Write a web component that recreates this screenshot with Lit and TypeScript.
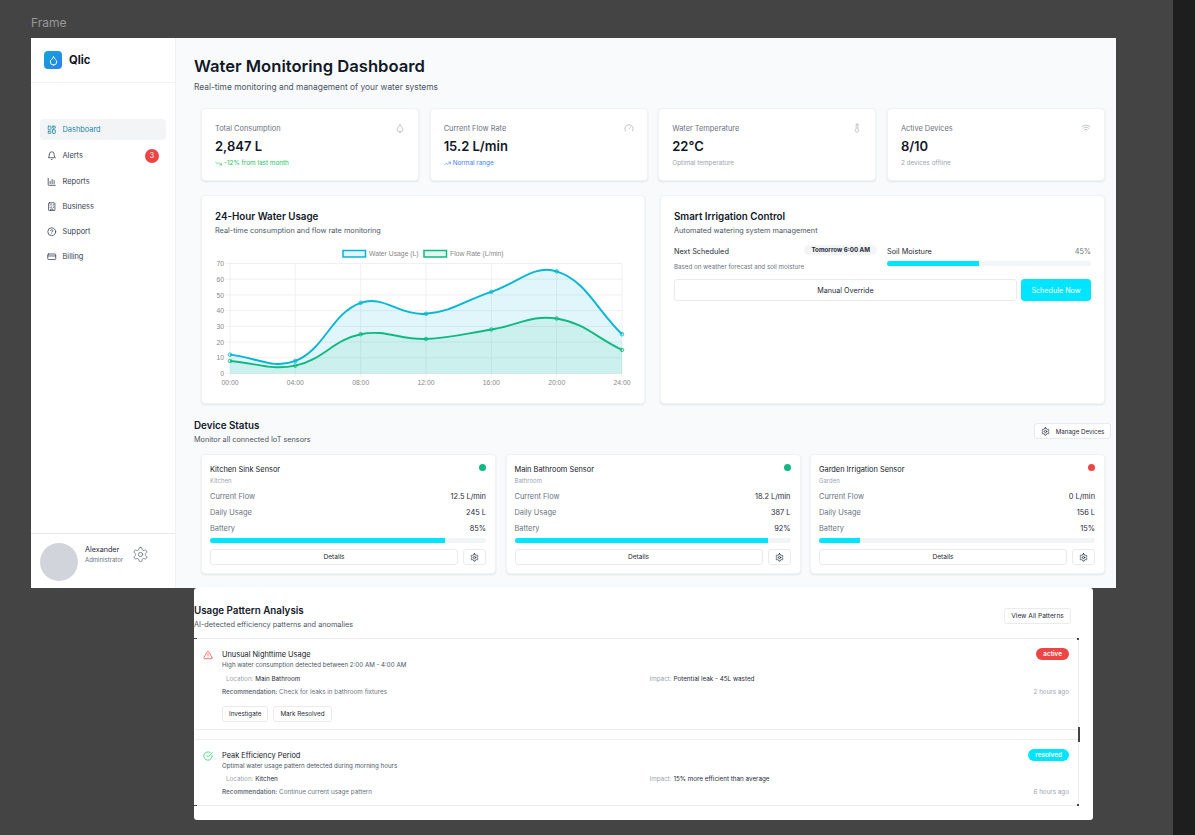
import { LitElement, html, css, svg } from 'lit';
import { customElement } from 'lit/decorators.js';

// lucide-style icon bodies, all on a 24 box
const icons: Record<string, unknown> = {
  drop: svg`<path d="M12 22a7 7 0 0 0 7-7c0-2-1-3.9-3-5.5s-3.5-4-4-6.5c-.5 2.5-2 4.9-4 6.5C6 11.1 5 13 5 15a7 7 0 0 0 7 7z"/>`,
  gauge: svg`<path d="m12 14 4-4"/><path d="M3.34 19a10 10 0 1 1 17.32 0"/>`,
  thermo: svg`<path d="M14 4v10.54a4 4 0 1 1-4 0V4a2 2 0 0 1 4 0Z"/>`,
  wifi: svg`<path d="M12 20h.01"/><path d="M2 8.82a15 15 0 0 1 20 0"/><path d="M5 12.859a10 10 0 0 1 14 0"/><path d="M8.5 16.429a5 5 0 0 1 7 0"/>`,
  dash: svg`<rect x="3" y="3" width="7" height="9" rx="1"/><rect x="14" y="3" width="7" height="5" rx="1"/><rect x="14" y="12" width="7" height="9" rx="1"/><rect x="3" y="16" width="7" height="5" rx="1"/>`,
  bell: svg`<path d="M6 8a6 6 0 0 1 12 0c0 7 3 9 3 9H3s3-2 3-9"/><path d="M10.3 21a1.94 1.94 0 0 0 3.4 0"/>`,
  bars: svg`<path d="M3 3v16a2 2 0 0 0 2 2h16"/><path d="M8 17v-6"/><path d="M13 17V6"/><path d="M18 17v-8"/>`,
  building: svg`<rect x="4" y="2" width="16" height="20" rx="2"/><path d="M9 22v-4h6v4"/><path d="M8 6h.01M16 6h.01M12 6h.01M12 10h.01M12 14h.01M16 10h.01M16 14h.01M8 10h.01M8 14h.01"/>`,
  help: svg`<circle cx="12" cy="12" r="10"/><path d="M9.09 9a3 3 0 0 1 5.83 1c0 2-3 3-3 3"/><path d="M12 17h.01"/>`,
  card: svg`<rect x="2" y="5" width="20" height="14" rx="2"/><path d="M2 10h20"/>`,
  gear: svg`<path d="M12.22 2h-.44a2 2 0 0 0-2 2v.18a2 2 0 0 1-1 1.73l-.43.25a2 2 0 0 1-2 0l-.15-.08a2 2 0 0 0-2.73.73l-.22.38a2 2 0 0 0 .73 2.73l.15.1a2 2 0 0 1 1 1.72v.51a2 2 0 0 1-1 1.74l-.15.09a2 2 0 0 0-.73 2.73l.22.38a2 2 0 0 0 2.73.73l.15-.08a2 2 0 0 1 2 0l.43.25a2 2 0 0 1 1 1.73V20a2 2 0 0 0 2 2h.44a2 2 0 0 0 2-2v-.18a2 2 0 0 1 1-1.73l.43-.25a2 2 0 0 1 2 0l.15.08a2 2 0 0 0 2.73-.73l.22-.39a2 2 0 0 0-.73-2.73l-.15-.08a2 2 0 0 1-1-1.74v-.5a2 2 0 0 1 1-1.74l.15-.09a2 2 0 0 0 .73-2.73l-.22-.38a2 2 0 0 0-2.73-.73l-.15.08a2 2 0 0 1-2 0l-.43-.25a2 2 0 0 1-1-1.73V4a2 2 0 0 0-2-2z"/><circle cx="12" cy="12" r="3"/>`,
  down: svg`<path d="m22 17-8.5-8.5-5 5L2 7"/><path d="M16 17h6v-6"/>`,
  up: svg`<path d="m22 7-8.5 8.5-5-5L2 17"/><path d="M16 7h6v6"/>`,
  alert: svg`<path d="m21.73 18-8-14a2 2 0 0 0-3.48 0l-8 14A2 2 0 0 0 4 21h16a2 2 0 0 0 1.73-3"/><path d="M12 9v4"/><path d="M12 17h.01"/>`,
  check: svg`<path d="M21.801 10A10 10 0 1 1 17 3.335"/><path d="m9 11 3 3L22 4"/>`,
};

const icon = (name: string, cls = '') =>
  html`<svg class="ic ${cls}" viewBox="0 0 24 24" fill="none" stroke="currentColor" stroke-width="2" stroke-linecap="round" stroke-linejoin="round">${icons[name]}</svg>`;

const navItems = [
  { icon: 'dash', label: 'Dashboard', active: true },
  { icon: 'bell', label: 'Alerts', badge: '3' },
  { icon: 'bars', label: 'Reports' },
  { icon: 'building', label: 'Business' },
  { icon: 'help', label: 'Support' },
  { icon: 'card', label: 'Billing' },
];

const stats = [
  { label: 'Total Consumption', icon: 'drop', value: '2,847 L', note: '-12% from last month', tone: 'green', trend: 'down' },
  { label: 'Current Flow Rate', icon: 'gauge', value: '15.2 L/min', note: 'Normal range', tone: 'blue', trend: 'up' },
  { label: 'Water Temperature', icon: 'thermo', value: '22°C', note: 'Optimal temperature', tone: '', trend: '' },
  { label: 'Active Devices', icon: 'wifi', value: '8/10', note: '2 devices offline', tone: '', trend: '' },
];

const devices = [
  { name: 'Kitchen Sink Sensor', place: 'Kitchen', flow: '12.5 L/min', daily: '245 L', battery: 85, ok: true },
  { name: 'Main Bathroom Sensor', place: 'Bathroom', flow: '18.2 L/min', daily: '387 L', battery: 92, ok: true },
  { name: 'Garden Irrigation Sensor', place: 'Garden', flow: '0 L/min', daily: '156 L', battery: 15, ok: false },
];

const patterns = [
  {
    title: 'Unusual Nighttime Usage', icon: 'alert', tone: 'red', state: 'active',
    desc: 'High water consumption detected between 2:00 AM - 4:00 AM',
    place: 'Main Bathroom', impact: 'Potential leak - 45L wasted',
    rec: 'Check for leaks in bathroom fixtures', time: '2 hours ago', actions: true,
  },
  {
    title: 'Peak Efficiency Period', icon: 'check', tone: 'green', state: 'resolved',
    desc: 'Optimal water usage pattern detected during morning hours',
    place: 'Kitchen', impact: '15% more efficient than average',
    rec: 'Continue current usage pattern', time: '6 hours ago', actions: false,
  },
];

const hours = ['00:00', '04:00', '08:00', '12:00', '16:00', '20:00', '24:00'];
const water = [12, 8, 45, 38, 52, 65, 25];
const flow = [8, 5, 25, 22, 28, 35, 15];

const X0 = 15;
const XW = 392;
const Y0 = 126.5;
const YH = 110;
const px = (i: number) => X0 + (XW * i) / 6;
const py = (v: number) => Y0 - (YH * v) / 70;

// same bezier the chart lib uses at tension 0.4
function spline(data: number[]) {
  const pts = data.map((v, i) => [px(i), py(v)]);
  const ctrl = pts.map((p, i) => {
    const a = pts[i - 1] || p;
    const b = pts[i + 1] || p;
    const d1 = Math.hypot(p[0] - a[0], p[1] - a[1]);
    const d2 = Math.hypot(b[0] - p[0], b[1] - p[1]);
    const s = d1 + d2 || 1;
    const fa = (0.4 * d1) / s;
    const fb = (0.4 * d2) / s;
    return {
      px: p[0] - fa * (b[0] - a[0]),
      py: Math.min(Y0, p[1] - fa * (b[1] - a[1])),
      nx: p[0] + fb * (b[0] - a[0]),
      ny: Math.min(Y0, p[1] + fb * (b[1] - a[1])),
    };
  });
  let d = `M${pts[0][0]} ${pts[0][1]}`;
  for (let i = 1; i < pts.length; i++) {
    d += `C${ctrl[i - 1].nx} ${ctrl[i - 1].ny} ${ctrl[i].px} ${ctrl[i].py} ${pts[i][0]} ${pts[i][1]}`;
  }
  return d;
}

function series(data: number[], color: string, fill: string) {
  const line = spline(data);
  const area = `${line}L${px(6)} ${Y0}L${px(0)} ${Y0}Z`;
  return svg`
    <path d=${area} fill=${fill} stroke="none"/>
    <path d=${line} fill="none" stroke=${color} stroke-width="1.9"/>
    ${data.map((v, i) => svg`<circle cx=${px(i)} cy=${py(v)} r="1.8" fill=${fill} stroke=${color} stroke-width=".8"/>`)}
  `;
}

@customElement('app-root')
export class AppRoot extends LitElement {
  static styles = css`
    :host {
      display: block;
      width: 1195px;
      height: 835px;
      font-family: Inter, 'Liberation Sans', sans-serif;
      color: #111827;
    }
    * { box-sizing: border-box; }
    .canvas {
      position: relative;
      width: 100%;
      height: 100%;
      background: #444444;
      overflow: hidden;
    }
    .strip {
      position: absolute;
      top: 0;
      right: 0;
      bottom: 0;
      width: 22px;
      background: #1e1e1e;
    }
    .frame-label {
      position: absolute;
      left: 31px;
      top: 15px;
      font-size: 12px;
      line-height: 15px;
      color: #999;
    }
    .ic { display: block; flex: none; width: 8px; height: 8px; }

    .frame {
      position: absolute;
      left: 31px;
      top: 38px;
      width: 1085px;
      height: 550px;
      display: flex;
      background: #f9fafb;
    }

    /* sidebar */
    .side {
      width: 145px;
      flex: none;
      display: flex;
      flex-direction: column;
      background: #fff;
      border-right: 1px solid #f0f1f3;
    }
    .brand {
      height: 45px;
      display: flex;
      align-items: center;
      gap: 7px;
      padding: 0 0 0 13px;
      border-bottom: 1px solid #f0f1f3;
      font-size: 11.2px;
      font-weight: 700;
    }
    .logo {
      width: 18px;
      height: 18px;
      border-radius: 4px;
      background: linear-gradient(135deg, #0ea5d9, #2f80ed);
      color: #fff;
      display: flex;
      align-items: center;
      justify-content: center;
    }
    .logo .ic { width: 11px; height: 11px; }
    .nav {
      flex: 1;
      padding: 36px 9px 0;
      display: flex;
      flex-direction: column;
    }
    .nav-item {
      height: 21px;
      margin-bottom: 4px;
      display: flex;
      align-items: center;
      gap: 6px;
      padding: 0 7px;
      border-radius: 4px;
      font-size: 7.4px;
      color: #374151;
    }
    .nav-item:nth-child(-n+2) { margin-bottom: 5px; }
    .nav-item .ic { width: 9.5px; height: 9.5px; }
    .nav-item.on { background: #f3f4f6; color: #1b86a6; }
    .count {
      margin-left: auto;
      width: 14px;
      height: 14px;
      border-radius: 50%;
      background: #ef4444;
      color: #fff;
      font-size: 7px;
      display: flex;
      align-items: center;
      justify-content: center;
    }
    .user {
      height: 55px;
      border-top: 1px solid #e8eaed;
      display: flex;
      align-items: center;
      padding: 0 0 0 9px;
      gap: 7px;
    }
    .avatar { width: 38px; height: 38px; border-radius: 50%; background: #d1d5db; flex: none; margin-top: 1px; }
    .who { font-size: 7.2px; line-height: 11px; color: #1f2937; margin-top: -15px; }
    .who small { display: block; font-size: 6px; line-height: 9px; color: #6b7280; }
    .user .ic { width: 17px; height: 17px; color: #6b7280; stroke-width: 1.2; margin: -14px 0 0 2px; }

    /* main */
    .main { flex: 1; min-width: 0; padding: 17px 5px 0 18px; }
    h1 { margin: 0; font-size: 16.6px; line-height: 22px; font-weight: 600; }
    .lead { margin: 4px 0 0; font-size: 8.4px; line-height: 12px; color: #4b5563; }
    .card {
      background: #fff;
      border: 1px solid #f1f2f4;
      border-radius: 4px;
      box-shadow: 0 1px 2px rgba(0, 0, 0, 0.09);
    }
    .stats {
      display: grid;
      grid-template-columns: repeat(4, 1fr);
      gap: 10.5px;
      margin: 15px 6px 0 7px;
    }
    .stat { height: 73px; padding: 14px 13px 0; position: relative; }
    .stat-top { display: flex; justify-content: space-between; color: #6b7280; font-size: 7.4px; line-height: 12px; }
    .stat-top .ic { color: #9ca3af; width: 10px; height: 10px; stroke-width: 1.5; margin-top: 0; }
    .stat-val { font-size: 13px; line-height: 20px; font-weight: 600; margin-top: 1px; }
    .stat-note { display: flex; align-items: center; gap: 2px; font-size: 6.4px; line-height: 10px; color: #9ca3af; margin-top: 2px; }
    .stat-note.green { color: #22c55e; }
    .stat-note.blue { color: #3b82f6; }
    .stat-note .ic { width: 7px; height: 7px; }

    .split {
      display: grid;
      grid-template-columns: 444px 445px;
      gap: 15px;
      margin: 14px 6px 0 7px;
    }
    .panel { height: 209px; padding: 14px 13px 0; }
    h2 { margin: 0; font-size: 9.8px; line-height: 14px; font-weight: 600; }
    .sub { font-size: 7.3px; line-height: 12px; color: #4b5563; margin-top: 1px; }
    .chart { display: block; width: 418px; height: 146px; margin-top: 10px; }
    .chart text { font-family: 'Liberation Sans', sans-serif; font-size: 6.8px; fill: #888; }

    .irr-row { display: flex; gap: 10px; margin-top: 9px; }
    .irr-l { width: 203px; flex: none; }
    .irr-r { flex: 1; }
    .irr-head { display: flex; justify-content: space-between; align-items: center; font-size: 7.3px; line-height: 11px; color: #1f2937; }
    .pill { background: #f3f4f6; border-radius: 6px; font-size: 6.2px; line-height: 10px; font-weight: 700; padding: 0 7px; margin-top: -4px; }
    .hint { font-size: 6.2px; line-height: 9px; color: #6b7280; margin-top: 5px; }
    .muted { color: #6b7280; }
    .bar { height: 4.5px; border-radius: 3px; background: #f3f4f6; overflow: hidden; }
    .bar div { height: 100%; background: #00e5ff; }
    .irr-r .bar { margin-top: 4px; }
    .irr-btns { display: flex; gap: 4px; margin-top: 8px; }
    .btn {
      display: flex;
      align-items: center;
      justify-content: center;
      gap: 6px;
      background: #fff;
      border: 1px solid #e9ebee;
      border-radius: 3px;
      font-family: inherit;
      font-size: 6.6px;
      color: #1f2937;
      padding: 0;
      height: 16px;
    }
    .irr-btns .btn { height: 22px; font-size: 7.2px; }
    .irr-btns .btn:first-child { flex: 1; }
    .btn.go { width: 70px; flex: none; background: #00e5ff; border-color: #00e5ff; color: #fff; }

    .sec-head { display: flex; justify-content: space-between; align-items: flex-start; margin-top: 15px; }
    .sec-head .btn { width: 77px; margin-top: 4px; font-size: 6.2px; }
    .sec-head .btn .ic { width: 9px; height: 9px; }
    .devices {
      display: grid;
      grid-template-columns: repeat(3, 295px);
      gap: 9.5px;
      margin: 8px 0 0 7px;
    }
    .device { height: 120px; padding: 9px 9px 0 8px; }
    .dev-top { display: flex; justify-content: space-between; }
    .dev-name { font-size: 7.4px; line-height: 11px; color: #111827; }
    .dev-place { font-size: 6px; line-height: 9px; color: #9ca3af; margin-top: 1px; }
    .dot { width: 7px; height: 7px; border-radius: 50%; background: #10b981; }
    .dot.off { background: #ef4444; }
    .dev-row { display: flex; justify-content: space-between; font-size: 7.4px; line-height: 12px; color: #1f2937; height: 16px; }
    .dev-row span:first-child { color: #6b7280; }
    .dev-rows { margin-top: 6px; }
    .device .bar { margin-top: -1px; }
    .dev-btns { display: flex; gap: 5px; margin-top: 6.5px; }
    .dev-btns .btn:first-child { flex: 1; }
    .dev-btns .btn:last-child { width: 23px; flex: none; }
    .dev-btns .ic { width: 9px; height: 9px; }

    /* second frame */
    .frame2 {
      position: absolute;
      left: 194px;
      top: 588px;
      width: 899px;
      height: 232px;
      background: #fff;
      border-radius: 3px;
      padding-top: 16px;
    }
    .an-head { display: flex; justify-content: space-between; align-items: flex-start; padding-right: 22px; }
    .an-head .btn { width: 67px; margin-top: 4px; }
    .plist { width: 885px; margin-top: 7px; display: flex; flex-direction: column; gap: 9px; }
    .pitem {
      position: relative;
      display: flex;
      gap: 9px;
      padding: 10px 9px 0;
      border: 1px solid #eceef0;
      border-left: 0;
      border-radius: 3px 0 0 3px;
      height: 91.5px;
    }
    .pitem.short { height: 67px; }
    .pitem > .ic { width: 10px; height: 10px; margin-top: 1px; stroke-width: 1.8; }
    .ic.red { color: #ef4444; }
    .ic.green { color: #22c55e; }
    .pbody { flex: 1; min-width: 0; }
    .ptop { display: flex; justify-content: space-between; }
    .ptitle { font-size: 7.4px; line-height: 11px; color: #111827; }
    .pdesc { font-size: 6.2px; line-height: 9px; color: #4b5563; }
    .state {
      height: 12px;
      border-radius: 6px;
      padding: 0 7px;
      font-size: 6.4px;
      line-height: 12px;
      font-weight: 600;
      color: #fff;
      background: #ef4444;
      margin-top: -1px;
    }
    .state.resolved { background: #00e5ff; }
    .pgrid { display: grid; grid-template-columns: 1fr 1fr; gap: 8px; font-size: 6.3px; line-height: 9px; color: #1f2937; margin-top: 5.5px; }
    .pgrid > div:first-child { padding-left: 4px; }
    .pgrid span { color: #9ca3af; }
    .prec { display: flex; justify-content: space-between; font-size: 6.3px; line-height: 9px; color: #6b7280; margin-top: 4px; }
    .prec b { font-weight: 600; color: #6b7280; }
    .prec .when { color: #9ca3af; }
    .pact { display: flex; gap: 5px; margin-top: 9.5px; }
    .pact .btn { padding: 0 6px; font-size: 6.3px; }
    /* stray clipping marks left over at the list edges of the reference */
    .mark { position: absolute; background: #444; }
    .mark.tr { left: 883px; top: 50px; width: 2px; height: 2px; }
    .mark.br { left: 883px; top: 216px; width: 2px; height: 2px; }
    .mark.gap { left: 884px; top: 139px; width: 1.5px; height: 15px; }
    .mark.tl { left: 0; top: 50px; width: 3px; height: 1px; }
    .mark.bl { left: 0; top: 217px; width: 3px; height: 1px; }
  `;

  renderStat(s: (typeof stats)[number]) {
    return html`<div class="card stat">
      <div class="stat-top"><span>${s.label}</span>${icon(s.icon)}</div>
      <div class="stat-val">${s.value}</div>
      <div class="stat-note ${s.tone}">${s.trend ? icon(s.trend) : ''}<span>${s.note}</span></div>
    </div>`;
  }

  renderChart() {
    return html`<svg class="chart" viewBox="0 0 418 146">
      ${[0, 10, 20, 30, 40, 50, 60, 70].map(
        (v) => svg`<line x1=${X0 - 4} x2=${X0 + XW} y1=${py(v)} y2=${py(v)} stroke="#ececec" stroke-width=".8"/>
          <text x=${X0 - 6} y=${py(v) + 2.6} text-anchor="end">${v}</text>`
      )}
      ${hours.map(
        (h, i) => svg`<line x1=${px(i)} x2=${px(i)} y1=${py(70)} y2=${Y0 + 4} stroke="#ececec" stroke-width=".8"/>
          <text x=${px(i)} y=${Y0 + 11.5} text-anchor="middle">${h}</text>`
      )}
      ${series(water, '#06b6d4', 'rgba(6,182,212,.12)')}
      ${series(flow, '#10b981', 'rgba(16,185,129,.1)')}
      <rect x="128" y="3.5" width="22.5" height="6.5" fill="rgba(6,182,212,.12)" stroke="#06b6d4" stroke-width="1.5"/>
      <text x="154" y="9">Water Usage (L)</text>
      <rect x="209" y="3.5" width="22.5" height="6.5" fill="rgba(16,185,129,.12)" stroke="#10b981" stroke-width="1.5"/>
      <text x="235" y="9">Flow Rate (L/min)</text>
    </svg>`;
  }

  renderDevice(d: (typeof devices)[number]) {
    return html`<div class="card device">
      <div class="dev-top">
        <div>
          <div class="dev-name">${d.name}</div>
          <div class="dev-place">${d.place}</div>
        </div>
        <div class="dot ${d.ok ? '' : 'off'}"></div>
      </div>
      <div class="dev-rows">
        <div class="dev-row"><span>Current Flow</span><span>${d.flow}</span></div>
        <div class="dev-row"><span>Daily Usage</span><span>${d.daily}</span></div>
        <div class="dev-row"><span>Battery</span><span>${d.battery}%</span></div>
      </div>
      <div class="bar"><div style="width:${d.battery}%"></div></div>
      <div class="dev-btns">
        <button class="btn">Details</button>
        <button class="btn">${icon('gear')}</button>
      </div>
    </div>`;
  }

  renderPattern(p: (typeof patterns)[number]) {
    return html`<div class="pitem ${p.actions ? '' : 'short'}">
      ${icon(p.icon, p.tone)}
      <div class="pbody">
        <div class="ptop">
          <div>
            <div class="ptitle">${p.title}</div>
            <div class="pdesc">${p.desc}</div>
          </div>
          <div class="state ${p.state}">${p.state}</div>
        </div>
        <div class="pgrid">
          <div><span>Location:</span> ${p.place}</div>
          <div><span>Impact:</span> ${p.impact}</div>
        </div>
        <div class="prec">
          <div><b>Recommendation:</b> ${p.rec}</div>
          <div class="when">${p.time}</div>
        </div>
        ${p.actions
          ? html`<div class="pact"><button class="btn">Investigate</button><button class="btn">Mark Resolved</button></div>`
          : ''}
      </div>
    </div>`;
  }

  render() {
    return html`<div class="canvas">
      <div class="strip"></div>
      <div class="frame-label">Frame</div>

      <div class="frame">
        <aside class="side">
          <div class="brand"><div class="logo">${icon('drop')}</div>Qlic</div>
          <nav class="nav">
            ${navItems.map(
              (n) => html`<div class="nav-item ${n.active ? 'on' : ''}">
                ${icon(n.icon)}<span>${n.label}</span>
                ${n.badge ? html`<span class="count">${n.badge}</span>` : ''}
              </div>`
            )}
          </nav>
          <div class="user">
            <div class="avatar"></div>
            <div class="who">Alexander<small>Administrator</small></div>
            ${icon('gear')}
          </div>
        </aside>

        <main class="main">
          <h1>Water Monitoring Dashboard</h1>
          <p class="lead">Real-time monitoring and management of your water systems</p>

          <div class="stats">${stats.map((s) => this.renderStat(s))}</div>

          <div class="split">
            <section class="card panel">
              <h2>24-Hour Water Usage</h2>
              <div class="sub">Real-time consumption and flow rate monitoring</div>
              ${this.renderChart()}
            </section>
            <section class="card panel">
              <h2>Smart Irrigation Control</h2>
              <div class="sub">Automated watering system management</div>
              <div class="irr-row">
                <div class="irr-l">
                  <div class="irr-head"><span>Next Scheduled</span><span class="pill">Tomorrow 6:00 AM</span></div>
                  <div class="hint">Based on weather forecast and soil moisture</div>
                </div>
                <div class="irr-r">
                  <div class="irr-head"><span>Soil Moisture</span><span class="muted">45%</span></div>
                  <div class="bar"><div style="width:45%"></div></div>
                </div>
              </div>
              <div class="irr-btns">
                <button class="btn">Manual Override</button>
                <button class="btn go">Schedule Now</button>
              </div>
            </section>
          </div>

          <div class="sec-head">
            <div>
              <h2>Device Status</h2>
              <div class="sub">Monitor all connected IoT sensors</div>
            </div>
            <button class="btn">${icon('gear')}Manage Devices</button>
          </div>
          <div class="devices">${devices.map((d) => this.renderDevice(d))}</div>
        </main>
      </div>

      <div class="frame2">
        <div class="an-head">
          <div>
            <h2>Usage Pattern Analysis</h2>
            <div class="sub">AI-detected efficiency patterns and anomalies</div>
          </div>
          <button class="btn">View All Patterns</button>
        </div>
        <div class="plist">${patterns.map((p) => this.renderPattern(p))}</div>
        <i class="mark tr"></i><i class="mark br"></i><i class="mark gap"></i><i class="mark tl"></i><i class="mark bl"></i>
      </div>
    </div>`;
  }
}
